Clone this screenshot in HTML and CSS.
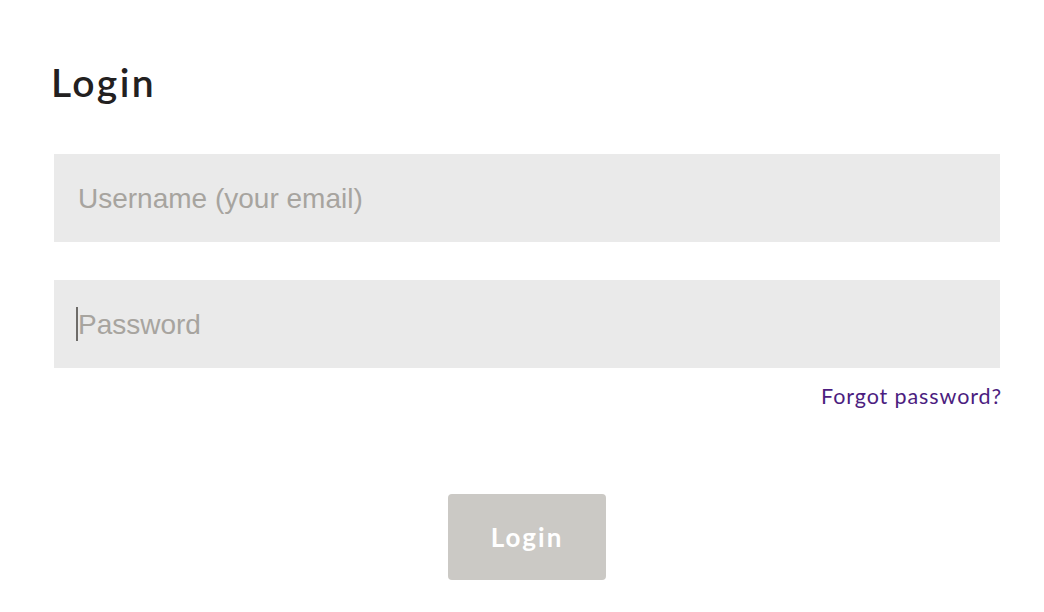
FILE: index.html
```html
<!DOCTYPE html>
<html>
<head>
<meta charset="utf-8">
<link rel="stylesheet" href="styles.css">
</head>
<body>
<main class="login">
  <h1 class="title">Login</h1>
  <form class="form">
    <div class="field"><span class="placeholder">Username (your email)</span></div>
    <div class="field field-pw"><span class="caret"></span><span class="placeholder">Password</span></div>
    <div class="forgot-row"><a class="forgot" href="#">Forgot password?</a></div>
    <div class="actions"><button type="button" class="btn">Login</button></div>
  </form>
</main>
</body>
</html>
```
FILE: styles.css
```css
html, body {
  margin: 0;
  padding: 0;
  background: #ffffff;
}
.login {
  padding: 56px 44px 0 54px;
  font-family: Lato, "Noto Sans", sans-serif;
}
.title {
  margin: 0 0 0 -3px;
  font-size: 39px;
  font-weight: 600;
  color: #222020;
  line-height: 52px;
  letter-spacing: 2.4px;
}
.form {
  margin-top: 46px;
  display: flex;
  flex-direction: column;
}
.field {
  height: 88px;
  background: #eaeaea;
  display: flex;
  align-items: center;
  padding-left: 24px;
  position: relative;
}
.field-pw {
  margin-top: 38px;
  padding-left: 22px;
}
.placeholder {
  font-family: "Liberation Sans", Arial, sans-serif;
  font-size: 28px;
  color: #a7a49f;
  padding-top: 2px;
}
.caret {
  width: 2px;
  height: 34px;
  background: #6e6c69;
  margin-right: 0;
}
.forgot-row {
  display: flex;
  justify-content: flex-end;
  margin-top: 15px;
  margin-right: -2px;
}
.forgot {
  font-size: 21.5px;
  color: #4c1d80;
  text-decoration: none;
  line-height: 26px;
  letter-spacing: 0.9px;
}
.actions {
  display: flex;
  justify-content: center;
  margin-top: 85px;
}
.btn {
  width: 158px;
  height: 86px;
  border: none;
  border-radius: 4px;
  background: #cbc9c5;
  color: #ffffff;
  font-family: Lato, "Noto Sans", sans-serif;
  font-weight: 700;
  font-size: 26px;
  letter-spacing: 2px;
  padding: 0 0 0 0;
}
```
